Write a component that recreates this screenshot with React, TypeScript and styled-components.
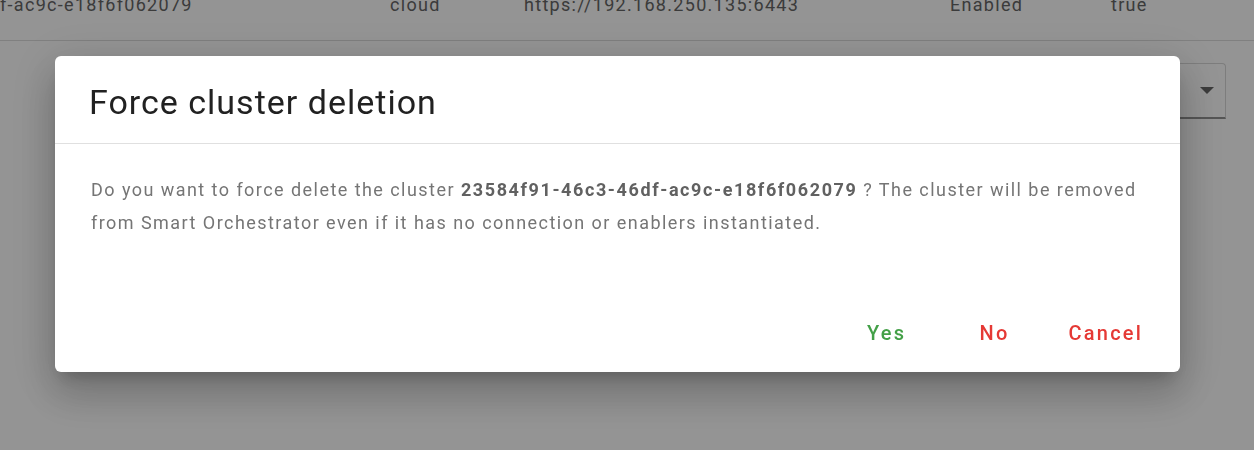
import React from "react";
import styled, { createGlobalStyle } from "styled-components";

const Global = createGlobalStyle`
  html, body { margin: 0; padding: 0; background: #ffffff; overflow: hidden; }
  body { font-family: Roboto, "Liberation Sans", Arial, sans-serif; }
`;

const Page = styled.div`
  width: 1254px;
  height: 450px;
  background: #ffffff;
  overflow: hidden;
`;

const TableRow = styled.div`
  display: grid;
  grid-template-columns: 390px 134px 426px 161px 1fr;
  height: 72px;
  margin-top: -31px;
  align-items: center;
  border-bottom: 1px solid #dcdcdc;
  font-size: 18px;
  letter-spacing: 1.3px;
  color: #666666;
  box-sizing: border-box;
`;

const Cell = styled.div`
  white-space: nowrap;
`;

const Toolbar = styled.div`
  display: flex;
  justify-content: flex-end;
  padding: 22px 28px 0 0;
`;

const SelectBox = styled.div`
  width: 200px;
  height: 56px;
  border: 1px solid #d8d8d8;
  border-bottom: 2px solid #939393;
  border-radius: 4px 4px 0 0;
  display: flex;
  align-items: center;
  justify-content: flex-end;
  padding-right: 11px;
  box-sizing: border-box;
`;

const Arrow = styled.div`
  width: 0;
  height: 0;
  border-left: 7px solid transparent;
  border-right: 7px solid transparent;
  border-top: 7px solid #666666;
`;

const Overlay = styled.div`
  position: fixed;
  inset: 0;
  background: rgba(0, 0, 0, 0.42);
  padding: 56px 0 0 55px;
  box-sizing: border-box;
`;

const Dialog = styled.div`
  width: 1125px;
  height: 316px;
  background: #ffffff;
  border-radius: 6px;
  box-shadow: 0px 11px 15px -7px rgba(0, 0, 0, 0.2),
    0px 24px 38px 3px rgba(0, 0, 0, 0.14), 0px 9px 46px 8px rgba(0, 0, 0, 0.12);
  display: flex;
  flex-direction: column;
  box-sizing: border-box;
`;

const Header = styled.div`
  padding: 26px 34px 21px;
  border-bottom: 1px solid #e0e0e0;
`;

const Title = styled.h2`
  margin: 0;
  font-size: 34px;
  line-height: 40px;
  font-weight: 400;
  letter-spacing: 1px;
  color: #212121;
`;

const Body = styled.div`
  padding: 29px 36px 0;
  font-size: 18px;
  line-height: 33px;
  letter-spacing: 1.45px;
  color: #757575;
`;

const Strong = styled.b`
  font-weight: 700;
  letter-spacing: 1.6px;
  color: #616161;
`;

const Actions = styled.div`
  margin-top: auto;
  display: flex;
  justify-content: flex-end;
  gap: 8px;
  padding: 0 21px 19px;
`;

const Button = styled.button<{ $tone: "green" | "red" }>`
  min-width: 100px;
  height: 40px;
  padding: 0 16px;
  border: none;
  background: transparent;
  font-family: Roboto, "Liberation Sans", Arial, sans-serif;
  font-size: 20px;
  font-weight: 500;
  letter-spacing: 2.2px;
  color: ${(p) => (p.$tone === "green" ? "#43a047" : "#e53935")};
  cursor: pointer;
`;

export default function App() {
  return (
    <>
      <Global />
      <Page>
        <TableRow>
          <Cell>f-ac9c-e18f6f062079</Cell>
          <Cell>cloud</Cell>
          <Cell>https://192.168.250.135:6443</Cell>
          <Cell>Enabled</Cell>
          <Cell>true</Cell>
        </TableRow>
        <Toolbar>
          <SelectBox>
            <Arrow />
          </SelectBox>
        </Toolbar>
      </Page>
      <Overlay>
        <Dialog role="dialog">
          <Header>
            <Title>Force cluster deletion</Title>
          </Header>
          <Body>
            Do you want to force delete the cluster{" "}
            <Strong>23584f91-46c3-46df-ac9c-e18f6f062079</Strong> ? The cluster
            will be removed from Smart Orchestrator even if it has no connection
            or enablers instantiated.
          </Body>
          <Actions>
            <Button $tone="green">Yes</Button>
            <Button $tone="red">No</Button>
            <Button $tone="red">Cancel</Button>
          </Actions>
        </Dialog>
      </Overlay>
    </>
  );
}
